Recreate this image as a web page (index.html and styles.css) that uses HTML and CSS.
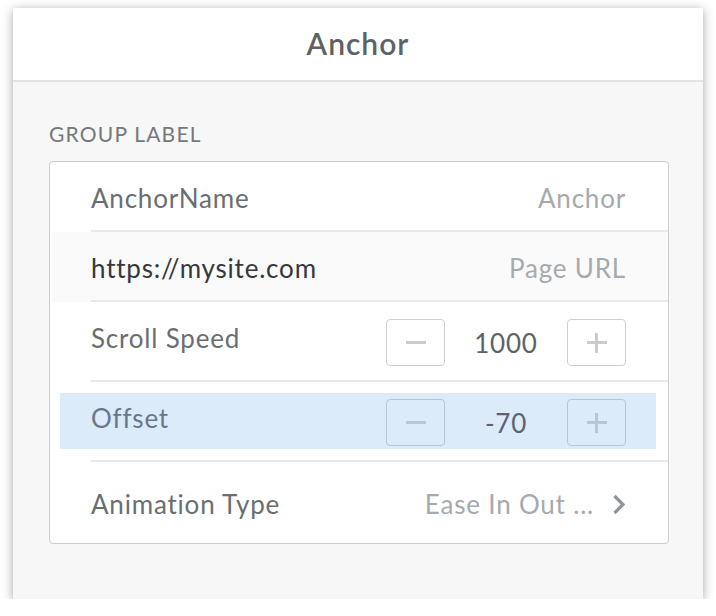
FILE: index.html
```html
<!DOCTYPE html>
<html>
<head>
<meta charset="utf-8">
<link rel="stylesheet" href="styles.css">
</head>
<body>
<div class="panel">
  <header class="panel-header">Anchor</header>
  <div class="panel-body">
    <div class="group-label">GROUP LABEL</div>
    <div class="card">
      <div class="row row-short">
        <div class="row-inner">
          <span class="label">AnchorName</span>
          <span class="placeholder">Anchor</span>
        </div>
      </div>
      <div class="row row-short row-input">
        <div class="row-inner">
          <span class="label value-text">https://mysite.com</span>
          <span class="placeholder">Page URL</span>
        </div>
      </div>
      <div class="row row-tall">
        <div class="row-inner">
          <span class="label label-up">Scroll Speed</span>
          <div class="stepper">
            <button class="step-btn"><span class="minus"></span></button>
            <span class="step-value">1000</span>
            <button class="step-btn"><span class="plus"></span></button>
          </div>
        </div>
      </div>
      <div class="row row-tall">
        <div class="row-inner">
          <div class="highlight">
            <span class="label label-up">Offset</span>
            <div class="stepper">
              <button class="step-btn"><span class="minus"></span></button>
              <span class="step-value">-70</span>
              <button class="step-btn"><span class="plus"></span></button>
            </div>
          </div>
        </div>
      </div>
      <div class="row row-tall row-last">
        <div class="row-inner">
          <span class="label">Animation Type</span>
          <span class="select">
            <span class="placeholder">Ease In Out ...</span>
            <svg class="chevron" width="14" height="21" viewBox="0 0 14 21"><path d="M2.5 2 L11 10.5 L2.5 19" fill="none" stroke="#919598" stroke-width="3.2"/></svg>
          </span>
        </div>
      </div>
    </div>
  </div>
</div>
</body>
</html>
```

FILE: styles.css
```css
* { box-sizing: border-box; }
html, body { margin: 0; padding: 0; background: #fff; }
body {
  font-family: Lato, "Open Sans", sans-serif;
  padding: 8px 13px 0 13px;
}
.panel {
  width: 690px;
  height: 591px;
  background: #f7f7f7;
  box-shadow: 0 2px 10px rgba(0,0,0,0.35);
  display: flex;
  flex-direction: column;
}
.panel-header {
  height: 74px;
  background: #fff;
  border-bottom: 2px solid #e3e3e3;
  display: flex;
  align-items: center;
  justify-content: center;
  font-size: 30px;
  font-weight: 600;
  letter-spacing: 1px;
  color: #5d6266;
  padding-bottom: 2px;
}
.panel-body {
  padding: 40px 34px 0 36px;
}
.group-label {
  font-size: 21px;
  color: #74787b;
  line-height: 24px;
  height: 39px;
  letter-spacing: 1.2px;
}
.card {
  background: #fff;
  border: 1.5px solid #cbcdcf;
  border-radius: 4px;
  overflow: hidden;
}
.row { padding-left: 41px; }
.row-input { background: #fafafa; margin-left: 2px; padding-left: 39px; }
.row-inner {
  display: flex;
  align-items: center;
  justify-content: space-between;
  border-bottom: 2px solid #e8e8e8;
  padding-right: 42px;
  padding-top: 3px;
}
.row-short .row-inner { height: 70px; }
.row-tall .row-inner { height: 80px; }
.row-last .row-inner { border-bottom: none; height: 81px; }
.label, .placeholder, .step-value {
  font-size: 26px;
  letter-spacing: 0.8px;
}
.label { color: #6a6e72; }
.value-text { color: #34383b; }
.placeholder { color: #a6aaad; }
.label-up { position: relative; top: -5px; }
.stepper {
  display: flex;
  align-items: center;
}
.step-btn {
  width: 59px;
  height: 47px;
  border: 1.5px solid #cdd0d2;
  border-radius: 4px;
  background: transparent;
  padding: 0;
  position: relative;
  display: flex;
  align-items: center;
  justify-content: center;
}
.minus, .plus {
  display: block;
  position: relative;
  width: 20px;
  height: 3px;
  background: #c9cbcd;
}
.plus::after {
  content: "";
  position: absolute;
  left: 8.5px;
  top: -8.5px;
  width: 3px;
  height: 20px;
  background: #c9cbcd;
}
.step-value {
  width: 122px;
  text-align: center;
  color: #5d6266;
}
.highlight {
  flex: 1;
  display: flex;
  align-items: center;
  justify-content: space-between;
  background: #dcebfa;
  height: 56px;
  margin: -3px -30px 0 -31px;
  padding: 3px 30px 0 31px;
  align-self: center;
}
.highlight .label { color: #68788a; }
.highlight .step-btn { border-color: #b5c6d6; }
.highlight .minus, .highlight .plus, .highlight .plus::after { background: #b6c7d7; }
.highlight .step-value { color: #5a6470; }
.select { display: flex; align-items: center; gap: 18px; }
.chevron { display: block; }
```
